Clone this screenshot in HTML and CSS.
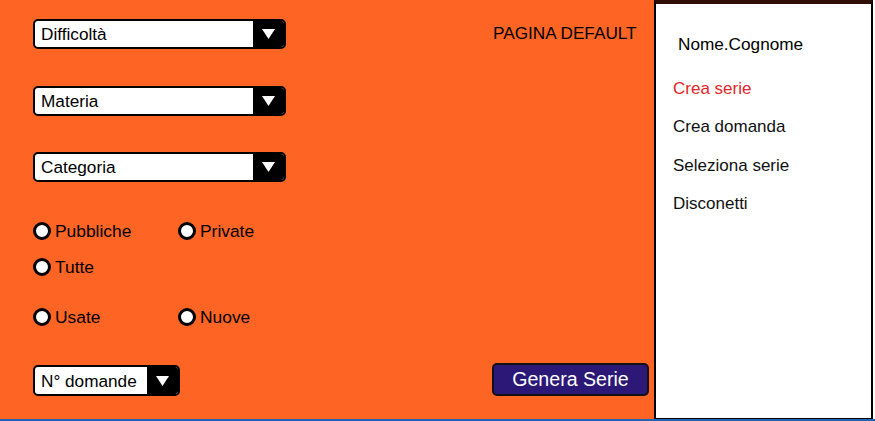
FILE: index.html
```html
<!DOCTYPE html>
<html lang="it">
<head>
<meta charset="utf-8">
<title>Pagina default</title>
<link rel="stylesheet" href="styles.css">
</head>
<body>
<div class="page">
  <main class="main">
    <form class="form">
      <div class="select sel-wide sel-first"><span class="sel-text">Difficoltà</span><span class="sel-arrow"><svg width="13" height="10" viewBox="0 0 13 10"><polygon points="0,0 13,0 6.5,10" fill="#fff"/></svg></span></div>
      <div class="select sel-wide sel-second"><span class="sel-text">Materia</span><span class="sel-arrow"><svg width="13" height="10" viewBox="0 0 13 10"><polygon points="0,0 13,0 6.5,10" fill="#fff"/></svg></span></div>
      <div class="select sel-wide sel-third"><span class="sel-text">Categoria</span><span class="sel-arrow"><svg width="13" height="10" viewBox="0 0 13 10"><polygon points="0,0 13,0 6.5,10" fill="#fff"/></svg></span></div>

      <div class="radio-row row-1">
        <label class="radio"><span class="dot"></span>Pubbliche</label>
        <label class="radio"><span class="dot"></span>Private</label>
      </div>
      <div class="radio-row row-2">
        <label class="radio"><span class="dot"></span>Tutte</label>
      </div>
      <div class="radio-row row-3">
        <label class="radio"><span class="dot"></span>Usate</label>
        <label class="radio"><span class="dot"></span>Nuove</label>
      </div>

      <div class="select sel-small"><span class="sel-text">N° domande</span><span class="sel-arrow"><svg width="13" height="10" viewBox="0 0 13 10"><polygon points="0,0 13,0 6.5,10" fill="#fff"/></svg></span></div>
    </form>
    <div class="side">
      <div class="title">PAGINA DEFAULT</div>
      <button class="btn" type="button">Genera Serie</button>
    </div>
  </main>
  <aside class="panel">
    <div class="user">Nome.Cognome</div>
    <nav class="menu">
      <a class="menu-item active">Crea serie</a>
      <a class="menu-item">Crea domanda</a>
      <a class="menu-item">Seleziona serie</a>
      <a class="menu-item">Disconetti</a>
    </nav>
  </aside>
</div>
<div class="bottom-line"></div>
</body>
</html>
```

FILE: styles.css
```css
* { box-sizing: border-box; }

html, body {
  margin: 0;
  padding: 0;
}

body {
  width: 875px;
  height: 421px;
  overflow: hidden;
  font-family: "Liberation Sans", Arial, sans-serif;
  color: #000;
  background: #fff;
}

.page {
  display: flex;
  height: 419px;
}

.main {
  width: 654px;
  background: #fe6424;
  display: flex;
}

.form {
  display: flex;
  flex-direction: column;
  padding: 19px 0 0 33px;
  flex: 1;
}

.select {
  display: flex;
  height: 30px;
  border: 2px solid #000;
  border-radius: 5px;
  overflow: hidden;
  background: #fff;
  font-size: 17.2px;
}

.sel-wide { width: 253px; }
.sel-second { margin-top: 37px; }
.sel-third { margin-top: 36px; }

.sel-small {
  width: 147px;
  height: 31px;
  margin-top: 38.5px;
}

.sel-text {
  flex: 1;
  display: flex;
  align-items: center;
  padding-left: 6px;
  line-height: 20px;
}

.sel-arrow {
  width: 31px;
  background: #000;
  display: flex;
  align-items: center;
  justify-content: center;
}

.radio-row {
  display: grid;
  grid-template-columns: 145px 145px;
  height: 20px;
}

.row-1 { margin-top: 39px; }
.row-2 { margin-top: 16px; }
.row-3 { margin-top: 29.5px; }

.radio {
  display: flex;
  align-items: center;
  font-size: 17.4px;
  line-height: 20px;
}

.dot {
  width: 18px;
  height: 18px;
  border: 3px solid #000;
  border-radius: 50%;
  background: #fff;
  margin-right: 4px;
  flex: none;
}

.side {
  width: 157px;
  margin-right: 5px;
  display: flex;
  flex-direction: column;
  justify-content: space-between;
  padding: 22.5px 0 23px;
}

.title {
  font-size: 17.2px;
  line-height: 20px;
  padding-left: 1px;
  white-space: nowrap;
}

.btn {
  height: 33px;
  width: 157px;
  background: #2b1877;
  color: #fff;
  border: 2px solid #111;
  border-radius: 5px;
  font-family: "Liberation Sans", Arial, sans-serif;
  font-size: 19.6px;
  padding: 0;
}

.panel {
  width: 219px;
  background: #fff;
  border: 2px solid #000;
  border-top: 4px solid #2e0e06;
  border-bottom: 1px solid #000;
  padding: 29.5px 0 0 17px;
}

.user {
  font-size: 17.2px;
  line-height: 20px;
  padding-left: 5px;
}

.menu {
  display: flex;
  flex-direction: column;
  gap: 18.5px;
  margin-top: 25px;
}

.menu-item {
  font-size: 17px;
  line-height: 20px;
  color: #111;
}

.menu-item.active {
  color: #e0262a;
}

.bottom-line {
  height: 2px;
  background: #2463b5;
}
```
